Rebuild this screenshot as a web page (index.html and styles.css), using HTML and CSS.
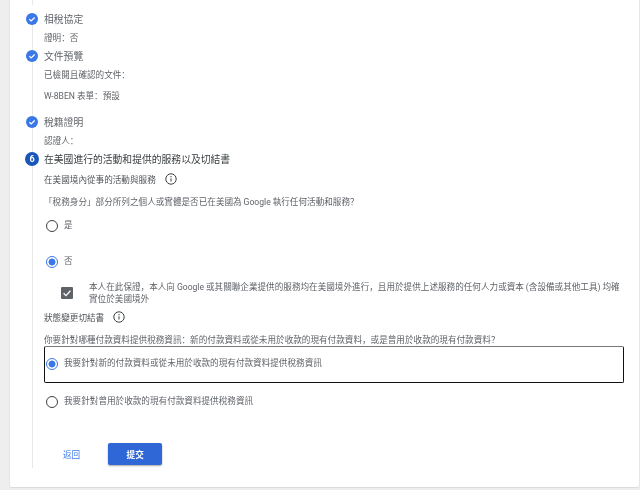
FILE: index.html
```html
<!DOCTYPE html>
<html lang="zh">
<head>
<meta charset="utf-8">
<title>稅務資訊</title>
<link rel="stylesheet" href="styles.css">
</head>
<body>
<main class="card">
  <div class="top-stub"></div>
  <section class="step step-a">
    <header class="step-head">
      <span class="badge"><svg viewBox="0 0 12 12" width="12" height="12"><circle cx="6" cy="6" r="6" fill="#3b78e7"/><path d="M3.4 6.2l1.8 1.7 3.4-3.4" fill="none" stroke="#fff" stroke-width="1.2"/></svg></span>
      <h2 class="step-title">相稅協定</h2>
    </header>
    <div class="step-body body-a"><p class="line">證明：否</p></div>
  </section>
  <section class="step">
    <header class="step-head">
      <span class="badge"><svg viewBox="0 0 12 12" width="12" height="12"><circle cx="6" cy="6" r="6" fill="#3b78e7"/><path d="M3.4 6.2l1.8 1.7 3.4-3.4" fill="none" stroke="#fff" stroke-width="1.2"/></svg></span>
      <h2 class="step-title">文件預覽</h2>
    </header>
    <div class="step-body body-b">
      <p class="line">已檢閱且確認的文件：</p>
      <p class="line line-w8"><span class="latin">W-8BEN</span> 表單：預設</p>
    </div>
  </section>
  <section class="step">
    <header class="step-head">
      <span class="badge"><svg viewBox="0 0 12 12" width="12" height="12"><circle cx="6" cy="6" r="6" fill="#3b78e7"/><path d="M3.4 6.2l1.8 1.7 3.4-3.4" fill="none" stroke="#fff" stroke-width="1.2"/></svg></span>
      <h2 class="step-title">稅籍證明</h2>
    </header>
    <div class="step-body body-a"><p class="line">認證人：</p></div>
  </section>
  <section class="step">
    <header class="step-head">
      <span class="badge badge-num">6</span>
      <h2 class="step-title step-title-active">在美國進行的活動和提供的服務以及切結書</h2>
    </header>
    <div class="step-body body-c">
      <p class="line line-icon">在美國境內從事的活動與服務
        <svg class="info" viewBox="0 0 12 12" width="12" height="12"><circle cx="6" cy="6" r="5.2" fill="none" stroke="#3c4043" stroke-width="1"/><path d="M6 5.3v3.2" stroke="#3c4043" stroke-width="1"/><circle cx="6" cy="3.7" r=".65" fill="#3c4043"/></svg>
      </p>
      <p class="line q1">「稅務身分」部分所列之個人或實體是否已在美國為 <span class="latin">Google</span> 執行任何活動和服務？</p>
      <div class="radio-row yes"><span class="radio"></span><span class="line">是</span></div>
      <div class="radio-row no"><span class="radio radio-on"></span><span class="line">否</span></div>
      <div class="check-row">
        <span class="check"><svg viewBox="0 0 12 12" width="12" height="12"><rect width="12" height="12" rx="1" fill="#5f6368"/><path d="M2.6 6.2l2.4 2.4 4.4-4.8" fill="none" stroke="#fff" stroke-width="1.3"/></svg></span>
        <p class="line check-text">本人在此保證，本人向 <span class="latin">Google</span> 或其關聯企業提供的服務均在美國境外進行，且用於提供上述服務的任何人力或資本 <span class="latin">(</span>含設備或其他工具<span class="latin">)</span> 均確實位於美國境外</p>
      </div>
      <p class="line line-icon status">狀態變更切結書
        <svg class="info" viewBox="0 0 12 12" width="12" height="12"><circle cx="6" cy="6" r="5.2" fill="none" stroke="#3c4043" stroke-width="1"/><path d="M6 5.3v3.2" stroke="#3c4043" stroke-width="1"/><circle cx="6" cy="3.7" r=".65" fill="#3c4043"/></svg>
      </p>
      <p class="line q2">你要針對哪種付款資料提供稅務資訊：新的付款資料或從未用於收款的現有付款資料，或是曾用於收款的現有付款資料？</p>
      <div class="choice-box"><span class="radio radio-on"></span><span class="line">我要針對新的付款資料或從未用於收款的現有付款資料提供稅務資訊</span></div>
      <div class="radio-row second"><span class="radio"></span><span class="line">我要針對曾用於收款的現有付款資料提供稅務資訊</span></div>
      <div class="actions">
        <a class="back">返回</a>
        <button class="submit">提交</button>
      </div>
    </div>
  </section>
</main>
</body>
</html>
```

FILE: styles.css
```css
* { box-sizing: border-box; }
html, body { margin: 0; height: 490px; overflow: hidden; }
body {
  background: #eeeeee;
  font-family: "Noto Sans CJK SC", "Noto Sans", sans-serif;
  color: #5f6368;
  padding: 0 0 2px 9px;
}
.latin { font-family: "Roboto", sans-serif; line-height: 0; }
.card {
  height: 488px;
  background: #fff;
  border-left: 1px solid #e6e6e6;
  border-right: 1px solid #e6e6e6;
  border-bottom: 1px solid #dcdcdc;
  border-radius: 0 0 3px 3px;
  padding: 0 0 0 16px;
}
.card > * { filter: blur(.3px); }
.top-stub { width: 1px; height: 13px; margin-left: 6px; background: linear-gradient(#e8e8e8 0 5px, transparent 5px); }
.step-head { display: flex; align-items: center; height: 12px; gap: 6px; }
.badge { width: 12px; height: 12px; flex: none; display: block; line-height: 0; }
.badge-num {
  width: 14px; height: 14px; margin: 0 -1px;
  border-radius: 50%;
  background: #1a56b8;
  color: #fff;
  font: 700 9px/14px "Roboto", sans-serif;
  text-align: center;
}
.step-title { margin: 0; font-size: 9.8px; line-height: 12px; font-weight: 400; color: #5f6368; white-space: nowrap; }
.step-title-active { color: #3c4043; }
.step-body { margin-left: 6px; border-left: 1px solid #e8e8e8; padding-left: 11px; }
.body-a { height: 25px; padding-top: 6px; }
.body-b { height: 54px; padding-top: 6px; }
.body-c { height: 303px; padding-top: 7px; }
.line { margin: 0; font-size: 8.6px; line-height: 12px; color: #5f6368; }
.line-w8 { margin-top: 9px; }
.line-icon { display: flex; align-items: center; gap: 9px; height: 14px; color: #4f5357; }
.info { flex: none; }
.q1 { margin-top: 9px; }
.radio-row { display: flex; align-items: flex-start; gap: 6px; }
.radio {
  width: 12px; height: 12px; flex: none;
  border: 1px solid #3c4043;
  border-radius: 50%;
  background: #fff;
}
.radio-on { border-color: #3b78e7; background: radial-gradient(circle, #3b78e7 0 3.2px, #fff 3.8px); }
.radio-row .line { margin-top: -2px; }
.yes { margin-top: 13px; height: 12px; margin-left: 2px; }
.no { margin-top: 24px; height: 12px; margin-left: 2px; }
.check-row { display: flex; margin-top: 12px; padding-left: 17px; gap: 16px; height: 30px; align-items: flex-start; }
.check { flex: none; width: 12px; height: 12px; margin-top: 7px; line-height: 0; }
.check-text { width: 534px; }
.status { margin-top: 0; height: 14px; }
.q2 { margin-top: 9px; }
.choice-box {
  display: flex; align-items: flex-start; gap: 6px;
  width: 580px; height: 37px;
  margin-top: 1px;
  padding: 11px 0 0 1px;
  border: 1px solid #111;
  border-top-color: #777;
  border-radius: 2px;
}
.choice-box .line { margin-top: -2px; }
.second { margin-top: 13px; margin-left: 2px; }
.actions { display: flex; align-items: center; margin-top: 35px; padding-left: 19px; gap: 28px; }
.back { font-size: 8.6px; line-height: 12px; color: #3b78e7; }
.submit {
  width: 54px; height: 22px;
  border: 0; border-radius: 2px;
  background: #2f67d6;
  color: #fff;
  font: 700 8.6px/22px "Noto Sans CJK SC", sans-serif;
  box-shadow: 0 1px 2px rgba(0,0,0,.35);
  padding: 0;
}
```
